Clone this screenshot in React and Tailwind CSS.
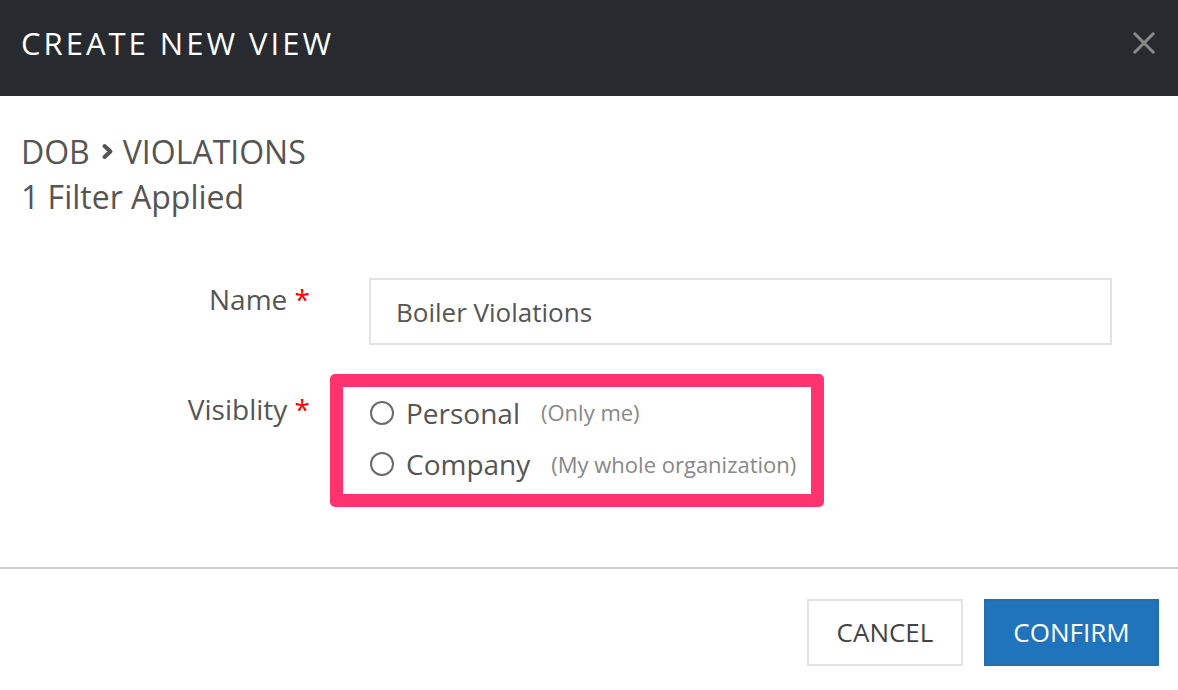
import React from 'react';

const font = { fontFamily: '"Open Sans", "Liberation Sans", sans-serif' };

function Radio({ label, hint }) {
  return (
    <label className="flex items-center h-[53px] cursor-pointer">
      <span className="w-[24px] h-[24px] rounded-full border-2 border-[#6b6b6b] bg-white shrink-0" />
      <span className="ml-[12px] text-[28px] text-[#555]">{label}</span>
      <span className="ml-[21px] text-[22px] text-[#888]">{hint}</span>
    </label>
  );
}

export default function App() {
  return (
    <div
      className="w-[1178px] h-[690px] bg-white flex flex-col overflow-hidden"
      style={font}
    >
      {/* Header */}
      <div className="h-[96px] bg-[#272b30] flex items-center justify-between pl-[21px] pr-[22px] pb-[10px] shrink-0">
        <h1 className="text-[31px] tracking-[3px] text-white font-normal leading-none">
          CREATE NEW VIEW
        </h1>
        <button className="w-[24px] h-[24px] flex items-center justify-center text-[#8a8a8a]">
          <svg width="22" height="22" viewBox="0 0 22 22" fill="none" stroke="currentColor" strokeWidth="3" strokeLinecap="square">
            <path d="M2 2L20 20M20 2L2 20" />
          </svg>
        </button>
      </div>

      {/* Body */}
      <div className="flex-1 px-[21px] pt-[33px]">
        <div className="text-[32px] text-[#555] leading-[45px]">
          <div className="flex items-center">
            <span>DOB</span>
            <svg className="ml-[11px] mr-[9px]" width="13" height="17" viewBox="0 0 13 17" fill="none" stroke="#555" strokeWidth="4" strokeLinecap="round" strokeLinejoin="round">
              <path d="M3.5 3L9.5 8.5L3.5 14" />
            </svg>
            <span>VIOLATIONS</span>
          </div>
          <div>1 Filter Applied</div>
        </div>

        <div className="mt-[59px] flex">
          <div className="w-[289px] text-right text-[28px] text-[#555] leading-none pt-[7px]">
            Name <span className="text-[#f00]">*</span>
          </div>
          <div className="ml-[59px] w-[743px] h-[67px] border-2 border-[#e3e3e3] flex items-center px-[25px] pt-[2px] text-[26px] text-[#555]">
            Boiler Violations
          </div>
        </div>

        <div className="mt-[29px] flex">
          <div className="w-[289px] text-right text-[28px] text-[#555] leading-none pt-[21px]">
            Visiblity <span className="text-[#f00]">*</span>
          </div>
          <div className="ml-[20px] w-[494px] h-[133px] border-[13px] border-[#ff3370] rounded-[5px] pl-[27px] pb-[4px] flex flex-col justify-center">
            <Radio label="Personal" hint="(Only me)" />
            <Radio label="Company" hint="(My whole organization)" />
          </div>
        </div>
      </div>

      {/* Footer */}
      <div className="border-t-2 border-[#cccccc] h-[123px] shrink-0 flex justify-end items-start pt-[30px] pr-[19px] gap-[21px]">
        <button className="w-[156px] h-[67px] border-2 border-[#e3e3e3] bg-white text-[26px] text-[#444]">
          CANCEL
        </button>
        <button className="w-[175px] h-[67px] border-2 border-[#2a6ea6] bg-[#1f74bb] text-[26px] text-white">
          CONFIRM
        </button>
      </div>
    </div>
  );
}
